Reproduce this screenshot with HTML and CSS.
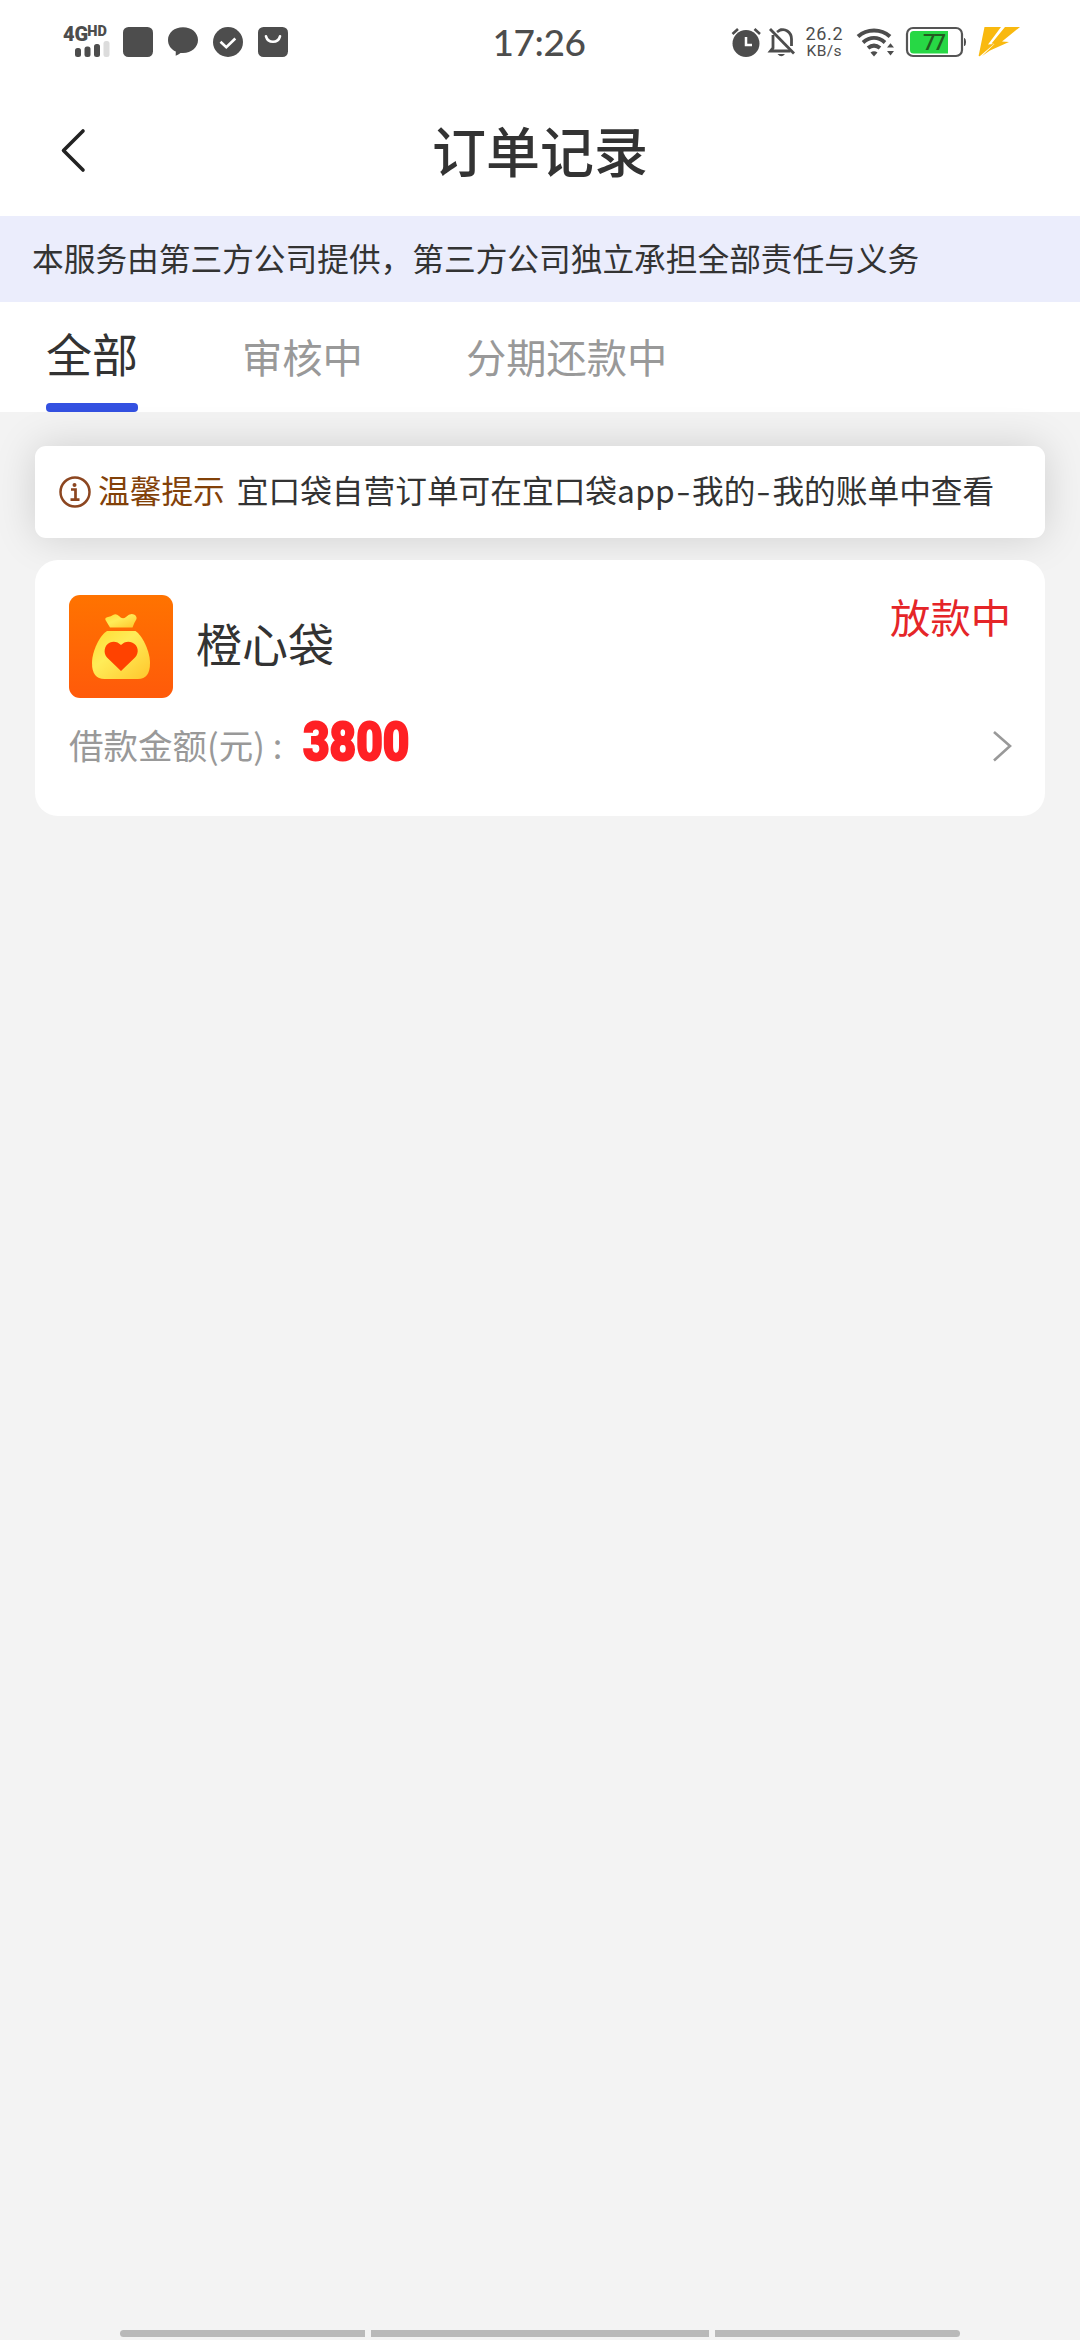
FILE: index.html
```html
<!DOCTYPE html>
<html lang="zh-CN">
<head>
<meta charset="utf-8">
<title>订单记录</title>
<link rel="stylesheet" href="styles.css">
</head>
<body>
<div class="screen">
  <header class="status">
    <div class="status-left">
      <svg width="48" height="34" viewBox="62 24 48 34">
        <text class="net" x="63" y="40" font-size="20">4G<tspan dx="-1" y="35" font-size="14.500">HD</tspan></text>
        <rect x="75" y="47" width="6" height="9" rx="2.5"/>
        <rect x="84.5" y="45.5" width="6" height="10.5" rx="2.5"/>
        <rect x="94" y="43" width="6" height="13" rx="2.5"/>
        <rect x="103.500" y="40" width="6" height="16" rx="2.5" fill="#dcdcdc"/>
      </svg>
      <svg class="first-app" width="30" height="30"><rect width="30" height="30" rx="5.500"/></svg>
      <svg width="30" height="30"><path d="M15 0.300C23.500 0.300 30 5.700 30 13S23.500 26 15 26L12.500 25.900Q10.500 27.500 7.700 28.800L7.800 24.600C3 22.500 0 18 0 13C0 5.700 6.500 .3 15 .3z"/></svg>
      <svg width="30" height="30"><circle cx="15" cy="15" r="15"/><path d="M7.500 14.800L13.300 20.300L22.300 11.500" fill="none" stroke="#fff" stroke-width="2.600"/></svg>
      <svg width="30" height="30"><rect width="30" height="30" rx="5.500"/><path d="M8 9.300C10 16.500 20 16.500 22 9.300" fill="none" stroke="#fff" stroke-width="2.600" stroke-linecap="round"/></svg>
    </div>
    <div class="clock">17:26</div>
    <div class="status-right">
      <svg width="30" height="30" viewBox="731 27 30 30">
        <circle cx="746" cy="43.500" r="13.500"/>
        <path d="M732.500 34L738 29M760 34L754.500 29" stroke="#4d4d4d" stroke-width="2.600"/>
        <path d="M746 37V45H752" fill="none" stroke="#fff" stroke-width="2.500"/>
      </svg>
      <svg width="28" height="30" viewBox="768 27 28 30">
        <path d="M773 35V48L770.500 51H790.500M777 32C785 26 791.500 33 791.500 39V46" fill="none" stroke="#4d4d4d" stroke-width="2.800"/>
        <path d="M770 29L794 53.500" stroke="#4d4d4d" stroke-width="2.800"/>
        <path d="M777.500 54H785Q781.300 58.500 777.500 54zM778 30Q781 26.500 784 30z"/>
      </svg>
      <svg class="speed" width="38" height="32" viewBox="805 27 38 32">
        <text x="805.500" y="41.300" font-size="18" textLength="37">26.2</text>
        <text x="806.500" y="56.500" font-size="15.500" textLength="35">KB/s</text>
      </svg>
      <svg class="wifi" width="38" height="30" viewBox="856 27 38 30">
        <path d="M858 36.500C867 28.500 881 28.500 890 36.500M863 42.500C870 36.500 878 36.500 885 42.500M868 48C872 44.800 876 44.800 880 48" fill="none" stroke="#4d4d4d" stroke-width="4"/>
        <path d="M870.500 52.500Q874 50 877.500 52.500L874 56.500zM887 47.500L890.500 43.200L894 47.500zM887 51L890.500 55.500L894 51z"/>
      </svg>
      <svg class="battery" width="60" height="30" viewBox="906 27 60 30">
        <rect x="907" y="28" width="55" height="28" rx="6" fill="#fff" stroke="#555" stroke-width="2.200"/>
        <path d="M913.500 31H948V53.500H913.500Q910 53.500 910 50V34.500Q910 31 913.500 31z" fill="#27d845"/>
        <path d="M964 38H964.500Q966 39 966 42T964.500 46H964z"/>
        <text class="charge" x="923" y="50" textLength="23">77</text>
      </svg>
      <svg class="bolt" width="42" height="30" viewBox="978 27 42 30">
        <path d="M984.500 27H1001L988 44.500L994 44L980 56Q978 57 979 54zM1005 27H1020L1002 41.500L1009 42L990 50.500L982 56L994.500 44L991.500 43.500z" fill="#f9b90f"/>
      </svg>
    </div>
  </header>
  <nav class="titlebar">
    <svg class="back" width="26" height="44" viewBox="0 0 26 44"><path d="M23 3L3.500 22.500L23 42" fill="none" stroke="#222" stroke-width="3.600" stroke-linecap="round" stroke-linejoin="round"/></svg>
    <h1>订单记录</h1>
  </nav>
  <div class="banner">本服务由第三方公司提供，第三方公司独立承担全部责任与义务</div>
  <div class="tabs">
    <div class="tab active">全部</div>
    <div class="tab">审核中</div>
    <div class="tab">分期还款中</div>
  </div>
  <main>
    <section class="tip">
      <svg width="32" height="32" viewBox="0 0 32 32"><circle cx="16" cy="16" r="14.500" fill="none" stroke="#8c4620" stroke-width="2.500"/><circle cx="15.500" cy="9" r="2" fill="#8c4620"/><path d="M12 13.500H16.500V23.500M11.500 23.700H20.500" fill="none" stroke="#8c4620" stroke-width="2.700"/></svg>
      <span class="tip-label">温馨提示</span>
      <span class="tip-text">宜口袋自营订单可在宜口袋<span class="latin">app</span><span class="dash">-</span>我的<span class="dash">-</span>我的账单中查看</span>
    </section>
    <section class="order">
      <div class="order-head">
        <svg class="logo" width="104" height="103" viewBox="0 0 104 103">
          <defs>
            <linearGradient id="orange" x1="0" y1="0" x2="0" y2="1"><stop offset="0" stop-color="#ff7300"/><stop offset="1" stop-color="#ff5a0a"/></linearGradient>
            <linearGradient id="gold" x1="0" y1="0" x2="1" y2="1"><stop offset="0" stop-color="#ffdc30"/><stop offset=".4" stop-color="#ffec58"/><stop offset="1" stop-color="#ffc62c"/></linearGradient>
          </defs>
          <rect width="104" height="103" rx="11" fill="url(#orange)"/>
          <path d="M41 32.500L36.500 25Q35.500 22.500 39 22Q42 21.500 44 20Q47 18 50 21Q53.500 25 57 22Q61 18 65 19.500Q68 21 67.500 24Q65 28 63.500 32.500z" fill="url(#gold)"/>
          <path d="M38 36H66.500C73 40 81 56 81 68Q81 84 69 84H35.500Q23 84 23 68C23 56 31 40 38 36z" fill="url(#gold)"/>
          <path d="M52 76L38 62.500C34 58.500 35 50 41 47.500C45 45.800 49 47 52 50C55 47 59 45.800 63 47.500C69.500 50 70.500 58 66 62.500z" fill="#ff4200"/>
        </svg>
        <div class="name">橙心袋</div>
        <div class="state">放款中</div>
      </div>
      <div class="order-row">
        <span class="label">借款金额(元)<span class="colon">:</span></span>
        <span class="amount">3800</span>
        <svg class="more" width="20" height="32" viewBox="0 0 20 32"><path d="M2 2L18 16L2 30.500" fill="none" stroke="#999" stroke-width="2.600"/></svg>
      </div>
    </section>
  </main>
  <footer class="gesture"><i></i><i></i><i></i></footer>
</div>
</body>
</html>
```
FILE: styles.css
```css
* { box-sizing: border-box; }
body { margin: 0; }
svg { display: block; flex: none; fill: #4d4d4d; overflow: visible; }
.screen {
  display: flex;
  flex-direction: column;
  width: 1080px;
  height: 2340px;
  overflow: hidden;
  background: #f3f3f3;
  color: #333;
  font-family: "Noto Sans CJK SC", sans-serif;
  white-space: nowrap;
}
.status {
  display: grid;
  grid-template-columns: 1fr 100px 1fr;
  height: 84px;
  padding: 0 60px 0 62px;
  align-items: center;
  background: #fff;
  color: #4d4d4d;
}
.status-left, .status-right { display: flex; align-items: center; }
.status-left { gap: 15px; }
.status-left .first-app { margin-left: -2px; }
.net { font-family: Roboto, sans-serif; font-weight: 900; }
.clock {
  padding-right: 4px;
  font: 500 37px/84px Lato, sans-serif;
  letter-spacing: -.4px;
  text-align: center;
}
.status-right { justify-content: flex-end; }
.status-right svg:nth-child(2) { margin-left: 7px; }
.speed { margin-left: 9px; font-family: Roboto, sans-serif; }
.wifi { margin-left: 13px; }
.battery { margin-left: 12px; }
.charge { font: 500 22px Roboto, sans-serif; fill: #235c20; }
.bolt { margin-left: 12px; }
.titlebar {
  display: grid;
  grid-template-columns: 60px 1fr 60px;
  align-items: center;
  height: 132px;
  padding: 0 60px;
  background: #fff;
}
h1 { margin: 0; font-size: 54px; font-weight: 500; line-height: 80px; text-align: center; }
.banner {
  height: 86px;
  padding-left: 32px;
  background: #ebedfc;
  font-size: 31.700px;
  line-height: 83px;
}
.tabs {
  display: flex;
  gap: 104px;
  height: 110px;
  padding-left: 46px;
  background: #fff;
}
.tab { color: #999; font-size: 40.300px; line-height: 107px; }
.tab:last-child { margin-left: -1px; }
.tab.active {
  display: flex;
  flex-direction: column;
  justify-content: space-between;
  width: 92px;
  color: #333;
  font-size: 46px;
  line-height: 101px;
}
.tab.active::after { content: ""; height: 9px; flex: none; border-radius: 4px; background: #3451e1; }
main { display: flex; flex: 1; flex-direction: column; gap: 22px; padding: 34px 35px; }
.tip {
  display: flex;
  align-items: center;
  height: 92px;
  padding-left: 24px;
  border-radius: 11px;
  background: #fff;
  box-shadow: 0 0 42px rgba(0, 0, 0, .15);
  font-size: 31.700px;
  line-height: 86px;
}
.tip-label, .tip-text { height: 92px; }
.tip-label { margin: 0 12px 0 7px; color: #824108; }
.latin { letter-spacing: .3px; }
.dash { display: inline-block; width: 17px; text-align: center; transform: scaleX(1.3); }
.order {
  z-index: 1;
  height: 256px;
  padding: 35px 34px 0;
  border-radius: 23px;
  background: #fff;
}
.order-head { display: flex; height: 103px; }
.name { flex: 1; margin-left: 23px; font-size: 46px; line-height: 95px; }
.state { color: #e52528; font-size: 40.300px; line-height: 42px; }
.order-row { display: flex; align-items: center; height: 96px; }
.label { width: 233px; margin-top: -5px; color: #999; font-size: 34.500px; }
.colon { margin-left: 8px; }
.amount {
  flex: 1;
  margin: -8px 0 0 1px;
  color: #ff2024;
  font: 900 54px/80px Roboto, sans-serif;
  -webkit-text-stroke: 2px #ff2024;
  transform: scaleX(.85);
  transform-origin: left;
}
.more { margin-right: -1px; }
.gesture { display: flex; justify-content: center; gap: 6px; height: 10px; }
.gesture i { width: 245px; height: 7px; background: #b9b9b9; }
.gesture i:first-child { border-radius: 4px 0 0 4px; }
.gesture i:nth-child(2) { width: 338px; }
.gesture i:last-child { border-radius: 0 4px 4px 0; }
```
